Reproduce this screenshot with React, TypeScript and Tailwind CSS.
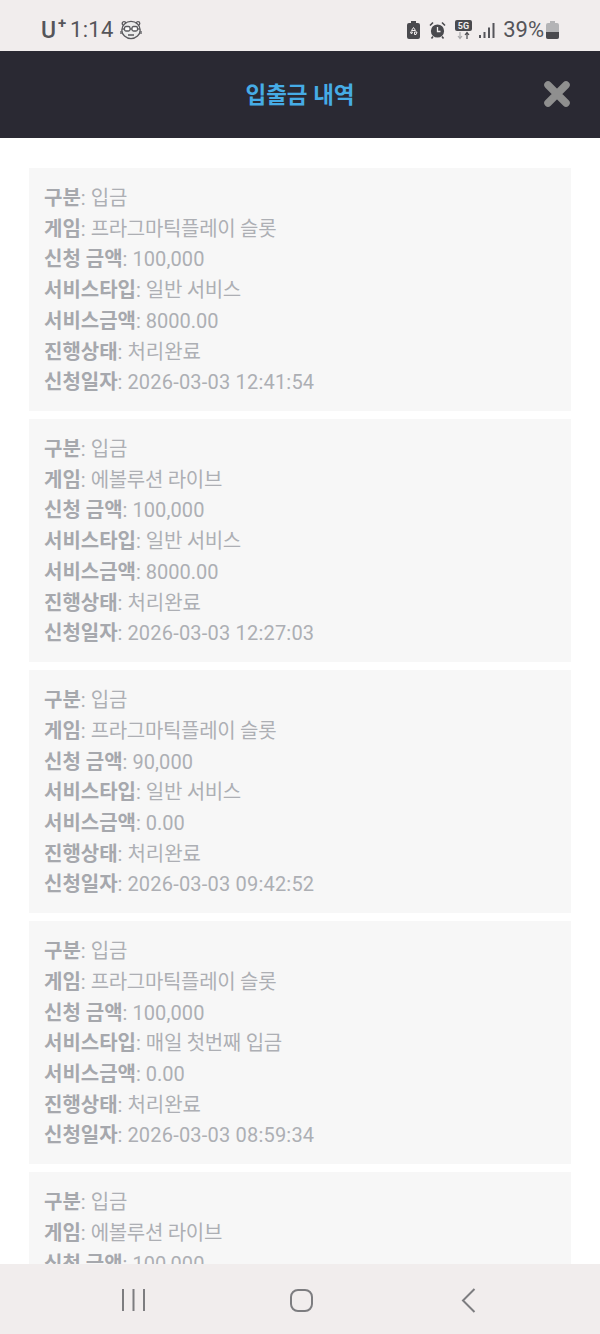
const records = [
  { game: '프라그마틱플레이 슬롯', amount: '100,000', type: '일반 서비스', fee: '8000.00', date: '2026-03-03 12:41:54' },
  { game: '에볼루션 라이브', amount: '100,000', type: '일반 서비스', fee: '8000.00', date: '2026-03-03 12:27:03' },
  { game: '프라그마틱플레이 슬롯', amount: '90,000', type: '일반 서비스', fee: '0.00', date: '2026-03-03 09:42:52' },
  { game: '프라그마틱플레이 슬롯', amount: '100,000', type: '매일 첫번째 입금', fee: '0.00', date: '2026-03-03 08:59:34' },
  { game: '에볼루션 라이브', amount: '100,000', type: '일반 서비스', fee: '8000.00', date: '2026-03-03 08:12:10' },
]

function Row({ label, value, valueClass }: { label: string; value: string; valueClass?: string }) {
  return (
    <div className="whitespace-nowrap">
      <span className="font-bold text-[#a6a8ad]">{label}</span>: <span className={valueClass}>{value}</span>
    </div>
  )
}

function StatusBar() {
  return (
    <div className="h-[51px] shrink-0 bg-[#f1eded] flex items-center justify-between pl-[41px] pr-[41px] pt-[9px] text-[#55555a] font-['Roboto',sans-serif]">
      <div className="flex items-center">
        <span className="text-[23px] font-medium leading-none relative pr-[10px]">
          U<span className="absolute right-0 top-[-3px] text-[15px] font-bold">+</span>
        </span>
        <span className="text-[22px] leading-none ml-[4px] tracking-[0.3px]">1:14</span>
        <svg className="ml-[6px]" width="22" height="20" viewBox="0 0 22 20" fill="none" stroke="#5a5a5e" strokeWidth="1.3">
          <circle cx="4" cy="3.5" r="1.8" />
          <circle cx="18" cy="3.5" r="1.8" />
          <ellipse cx="11" cy="10" rx="9.2" ry="8.6" fill="#ececec" />
          <path d="M2 9h18" />
          <rect x="4.5" y="6.5" width="5.5" height="4.5" rx="1.5" fill="#fff" />
          <rect x="12" y="6.5" width="5.5" height="4.5" rx="1.5" fill="#fff" />
          <path d="M1 11v3M21 11v3M8 15h6" />
        </svg>
      </div>
      <div className="flex items-center">
        <svg width="13" height="18" viewBox="0 0 13 18">
          <path d="M4 0h5v2h2a2 2 0 0 1 2 2v12a2 2 0 0 1-2 2H2a2 2 0 0 1-2-2V4a2 2 0 0 1 2-2h2z" fill="#4a4a4e" />
          <path d="M6.5 6.5l2 3H4.5zM3.5 11h2l-1 2zM7.5 11h2.5l-1 2.5H7.5z" fill="none" stroke="#f1eded" strokeWidth="1" />
        </svg>
        <svg className="ml-[9px]" width="17" height="18" viewBox="0 0 17 18">
          <circle cx="8.5" cy="10" r="6.6" fill="#4a4a4e" />
          <path d="M1 4.5L4 1.5M16 4.5L13 1.5M4 15.5l-1.5 2M13 15.5l1.5 2" stroke="#4a4a4e" strokeWidth="1.6" />
          <path d="M8.5 6v4.5h3" stroke="#f1eded" strokeWidth="1.3" fill="none" />
        </svg>
        <svg className="ml-[9px]" width="17" height="20" viewBox="0 0 17 20">
          <rect x="0" y="0" width="17" height="11" rx="2" fill="#4a4a4e" />
          <text x="8.5" y="9" textAnchor="middle" fontSize="9" fontWeight="700" fill="#f1eded" fontFamily="Roboto, sans-serif">5G</text>
          <path d="M5 12v6M3 16l2 2.5 2-2.5" stroke="#a8a8aa" strokeWidth="1.2" fill="none" />
          <path d="M12 19v-6M10 15l2-2.5 2 2.5" stroke="#4a4a4e" strokeWidth="1.2" fill="none" />
        </svg>
        <svg className="ml-[7px]" width="16" height="17" viewBox="0 0 16 17" fill="#55555a">
          <rect x="0" y="13" width="2" height="3" />
          <rect x="4.5" y="10" width="2" height="6" />
          <rect x="9" y="5.5" width="2" height="10.5" />
          <rect x="13.5" y="1" width="2" height="15" />
        </svg>
        <span className="text-[22px] leading-none ml-[8px]">39%</span>
        <svg className="ml-[2px]" width="13" height="18" viewBox="0 0 13 18">
          <path d="M4 0h5v2h2a2 2 0 0 1 2 2v12a2 2 0 0 1-2 2H2a2 2 0 0 1-2-2V4a2 2 0 0 1 2-2h2z" fill="#b4b4b6" />
          <path d="M0 11h13v5a2 2 0 0 1-2 2H2a2 2 0 0 1-2-2z" fill="#4a4a4e" />
        </svg>
      </div>
    </div>
  )
}

function Header() {
  return (
    <div className="h-[87px] shrink-0 bg-[#2a2933] relative flex items-center justify-center">
      <h1 className="text-[22.5px] font-bold text-[#46ace6] leading-none pt-[1px]">입출금 내역</h1>
      <svg className="absolute right-[30px] top-[30px]" width="26" height="26" viewBox="0 0 26 26">
        <path d="M4 4L22 22M22 4L4 22" stroke="#8f8f8f" strokeWidth="7.5" strokeLinecap="round" />
      </svg>
    </div>
  )
}

function NavBar() {
  return (
    <div className="h-[70px] shrink-0 bg-[#f1eded] flex items-start justify-between pl-[122px] pr-[124px] pt-[24px]">
      <svg width="23" height="24" viewBox="0 0 23 24" stroke="#7d7d80" strokeWidth="2">
        <path d="M1 1v22M11.5 1v22M22 1v22" />
      </svg>
      <svg className="ml-[-4px]" width="23" height="24" viewBox="0 0 23 24" fill="none" stroke="#7d7d80" strokeWidth="2">
        <rect x="1" y="2" width="21" height="21" rx="7" />
      </svg>
      <svg width="15" height="25" viewBox="0 0 15 25" fill="none" stroke="#7d7d80" strokeWidth="2">
        <path d="M13.5 1L2 12.5 13.5 24" />
      </svg>
    </div>
  )
}

export default function App() {
  return (
    <div className="h-[1334px] w-[600px] flex flex-col overflow-hidden bg-white font-['Roboto','Noto_Sans_CJK_KR',sans-serif]">
      <StatusBar />
      <Header />
      <main className="flex-1 overflow-hidden px-[29px] pt-[30px] flex flex-col gap-[8px]">
        {records.map((r, i) => (
          <div key={i} className="shrink-0 bg-[#f7f7f7] px-[15px] pt-[15px] pb-[13px] text-[20px] leading-[30.72px] text-[#adafb4]">
            <Row label="구분" value="입금" />
            <Row label="게임" value={r.game} valueClass="tracking-[-0.3px]" />
            <Row label="신청 금액" value={r.amount} valueClass="tracking-[0.1px]" />
            <Row label="서비스타입" value={r.type} valueClass="tracking-[-0.3px]" />
            <Row label="서비스금액" value={r.fee} />
            <Row label="진행상태" value="처리완료" />
            <Row label="신청일자" value={r.date} valueClass="tracking-[0.2px]" />
          </div>
        ))}
      </main>
      <NavBar />
    </div>
  )
}
